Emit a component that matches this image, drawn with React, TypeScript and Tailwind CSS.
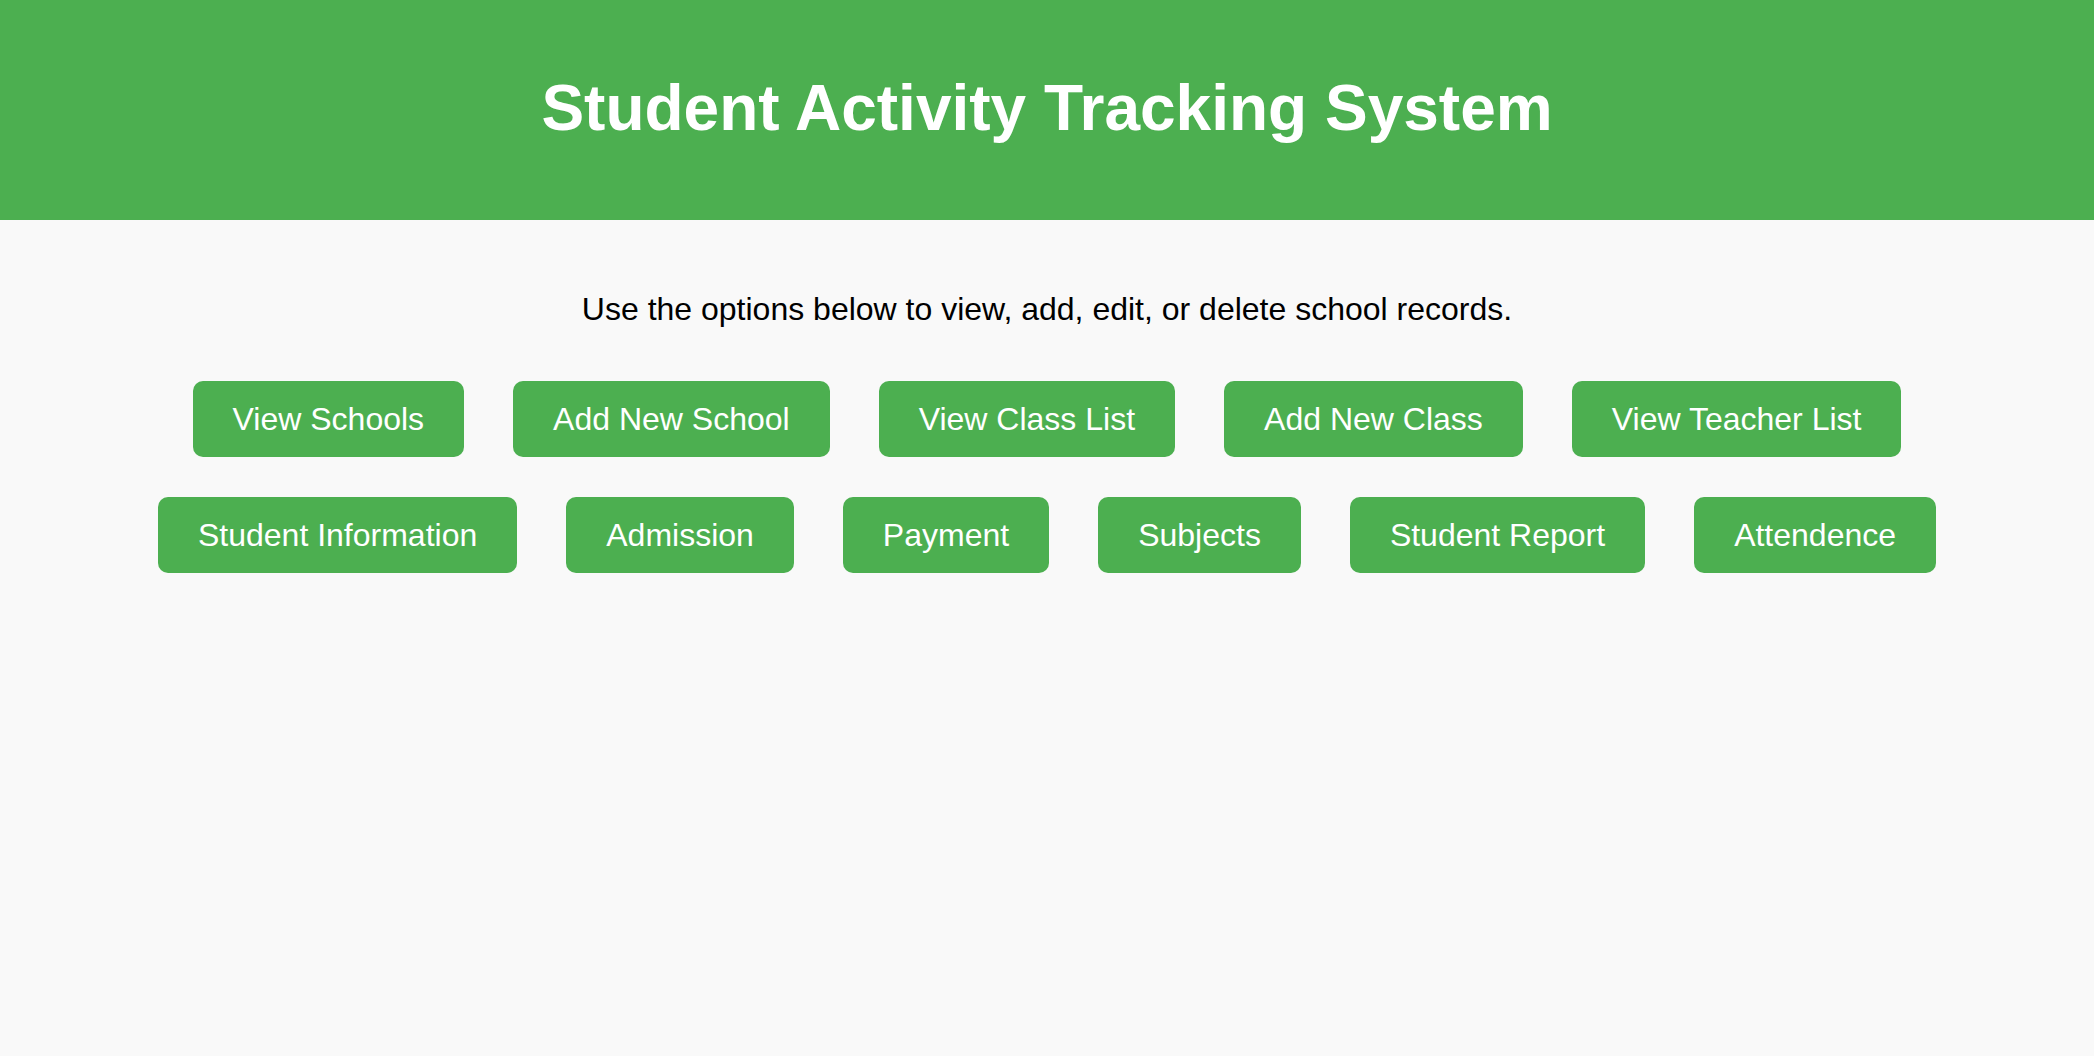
import React from "react";

const row1 = ["View Schools", "Add New School", "View Class List", "Add New Class", "View Teacher List"];
const row2 = ["Student Information", "Admission", "Payment", "Subjects", "Student Report", "Attendence"];

function Btn({ label }: { label: string }) {
  return (
    <button className="bg-[#4caf50] text-white text-[32px] leading-[36px] px-[40px] py-[20px] rounded-[10px] whitespace-nowrap cursor-pointer">
      {label}
    </button>
  );
}

export default function App() {
  return (
    <div className="min-h-[1056px] w-full bg-[#f9f9f9] font-['Liberation_Sans',Arial,sans-serif] text-black">
      <header className="bg-[#4caf50] h-[220px] pt-[72px] text-center">
        <h1 className="text-white text-[64px] font-bold leading-[1.15]">Student Activity Tracking System</h1>
      </header>
      <main className="flex flex-col items-center">
        <p className="text-[32px] leading-[1.15] mt-[71px] text-center">
          Use the options below to view, add, edit, or delete school records.
        </p>
        <div className="flex flex-col items-center gap-[40px] mt-[53px]">
          <div className="flex justify-center gap-[49px]">
            {row1.map((l) => (
              <Btn key={l} label={l} />
            ))}
          </div>
          <div className="flex justify-center gap-[49px]">
            {row2.map((l) => (
              <Btn key={l} label={l} />
            ))}
          </div>
        </div>
      </main>
    </div>
  );
}
